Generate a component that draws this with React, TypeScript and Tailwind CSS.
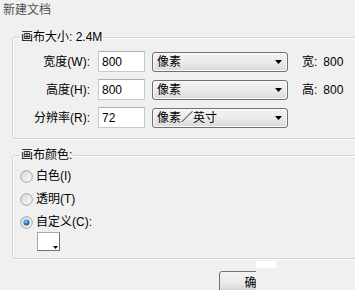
import React from "react";

function Arrow() {
  return (
    <svg width="7" height="4" viewBox="0 0 7 4" className="block">
      <path d="M0 0H7L3.5 4Z" fill="#000" />
    </svg>
  );
}

function Select({ text }: { text: string }) {
  return (
    <div className="ml-[7px] flex h-[20px] w-[136px] items-center justify-between rounded-[3px] border border-[#707070] bg-gradient-to-b from-[#f4f4f4] via-[#ebebeb] to-[#d9d9d9] pl-[4px] pr-[5px] shadow-[inset_0_0_0_1px_#fbfbfb]">
      <span>{text}</span>
      <Arrow />
    </div>
  );
}

function Row({ label, value, unit, extra }: { label: string; value: string; unit: string; extra?: [string, string] }) {
  return (
    <div className="flex h-[21px] items-center">
      <span className="w-[77px] text-right">{label}</span>
      <div className="ml-[8px] flex h-[21px] w-[47px] items-center border border-[#c5c9d0] border-t-[#abadb3] bg-white pl-[3px]">
        {value}
      </div>
      <Select text={unit} />
      {extra && (
        <span className="ml-[14px] flex items-center">
          <span>{extra[0]}</span>
          <span className="ml-[6px]">{extra[1]}</span>
        </span>
      )}
    </div>
  );
}

function Radio({ checked }: { checked?: boolean }) {
  return (
    <svg width="13" height="13" viewBox="0 0 13 13" className="block">
      <defs>
        <linearGradient id="rg" x1="0" y1="0" x2="1" y2="1">
          <stop offset="0" stopColor="#d8d8d8" />
          <stop offset="1" stopColor="#fafafa" />
        </linearGradient>
        <radialGradient id="bg" cx="0.4" cy="0.35" r="0.7">
          <stop offset="0" stopColor="#9fd0ff" />
          <stop offset="0.5" stopColor="#2f7fd4" />
          <stop offset="1" stopColor="#0d4a94" />
        </radialGradient>
      </defs>
      <circle cx="6.5" cy="6.5" r="5.8" fill="url(#rg)" stroke="#9a9a9a" strokeWidth="0.9" />
      {checked && <circle cx="6.5" cy="6.5" r="3" fill="url(#bg)" />}
    </svg>
  );
}

function RadioRow({ label, checked }: { label: string; checked?: boolean }) {
  return (
    <div className="flex h-[16px] items-center pl-[7px]">
      <Radio checked={checked} />
      <span className="ml-[3px]">{label}</span>
    </div>
  );
}

export default function App() {
  return (
    <div className="relative h-[290px] w-[355px] overflow-hidden bg-[#f0f0f0] font-['Liberation_Sans','Noto_Sans_CJK_SC',sans-serif] text-[12px] leading-[16px] text-black">
      <div className="h-[20px] pl-[3px] pt-[2px] text-[#4f4f4f]">新建文档</div>

      <fieldset className="ml-[12px] mt-[9px] w-[400px] rounded-[3px] border border-[#d5d5d5] pb-[10px] pt-[6px] shadow-[inset_1px_1px_0_#ffffff,1px_1px_0_#ffffff]">
        <legend className="ml-[7px] px-[1px]">画布大小: 2.4M</legend>
        <div className="flex flex-col gap-[7px]">
          <Row label="宽度(W):" value="800" unit="像素" extra={["宽:", "800"]} />
          <Row label="高度(H):" value="800" unit="像素" extra={["高:", "800"]} />
          <Row label="分辨率(R):" value="72" unit="像素／英寸" />
        </div>
      </fieldset>

      <fieldset className="ml-[12px] mt-[8px] w-[400px] rounded-[3px] border border-[#d5d5d5] pb-[7px] pt-[5px] shadow-[inset_1px_1px_0_#ffffff,1px_1px_0_#ffffff]">
        <legend className="ml-[7px] px-[1px]">画布颜色:</legend>
        <div className="flex flex-col gap-[7px]">
          <RadioRow label="白色(I)" />
          <RadioRow label="透明(T)" />
          <RadioRow label="自定义(C):" checked />
        </div>
        <div className="relative ml-[24px] mt-[2px] h-[19px] w-[23px] border border-[#a8a8a8] border-b-[#6f6f6f] border-r-[#6f6f6f] bg-white">
          <svg width="5" height="3" viewBox="0 0 5 3" className="absolute bottom-[1px] right-[1px] block">
            <path d="M0 0H5L2.5 3Z" fill="#000" />
          </svg>
        </div>
      </fieldset>

      <button className="ml-[219px] mt-[12px] flex h-[23px] w-[75px] items-center justify-center rounded-[3px] border border-[#707070] bg-gradient-to-b from-[#f2f2f2] via-[#ebebeb] to-[#cfcfcf] text-black">
        确定
      </button>

      <div className="absolute bottom-0 left-[256px] right-0 top-[261px] bg-[#f1f1f1]">
        <div className="h-[7px] w-[20px] bg-white" />
      </div>
    </div>
  );
}
